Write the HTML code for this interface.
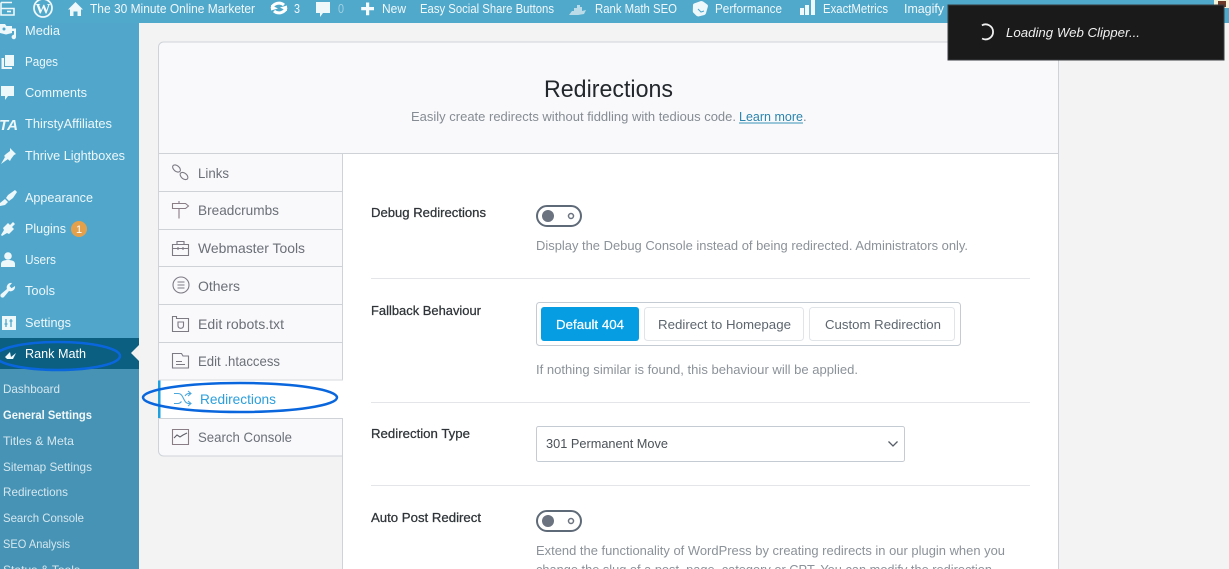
<!DOCTYPE html>
<html lang="en">
<head>
<meta charset="utf-8">
<title>Redirections</title>
<style>
html,body{margin:0;padding:0;width:1229px;height:569px;overflow:hidden;background:#f3f3f4}
svg{display:block;filter:blur(.3px)}
text{font-family:"Liberation Sans",sans-serif}
.bar text{font-size:13px;fill:#f1f8fb}
.side text{font-size:13px;fill:#eef7fa}
.sub text{font-size:12px;fill:#d5e7ef}
.tab text{font-size:14px;fill:#6b7078}
.ti{fill:none;stroke:#7d7a84;stroke-width:1.1}
.lab text{font-size:12.5px;fill:#2f3438;stroke:#2f3438;stroke-width:.25}
.desc text{font-size:12.5px;fill:#8b9299}
.btn{font-size:12.5px;fill:#5d666f}
</style>
</head>
<body>
<svg width="1229" height="569" viewBox="0 0 1229 569" xmlns="http://www.w3.org/2000/svg">
<!-- backgrounds -->
<rect width="1229" height="569" fill="#f3f3f4"/>
<rect x="0" y="23" width="139" height="546" fill="#50a7cb"/>
<rect x="0" y="338" width="139" height="31" fill="#0b5f80"/>
<rect x="0" y="369" width="139" height="200" fill="#4693b5"/>
<path d="M139 345l-8 8 8 8z" fill="#f1f1f1"/>
<rect width="1229" height="23" fill="#50a9cb"/>

<!-- top bar -->
<g class="bar">
<g fill="none" stroke="#eef7fa" stroke-width="1.6"><path d="M1 2.500h11M1 2.500v12.500h13V8.500H1"/><path d="M7 11.500h4"/></g>
<circle cx="43" cy="8" r="9" fill="none" stroke="#eef7fa" stroke-width="1.800"/>
<text x="35.500" y="13.500" textLength="15" lengthAdjust="spacingAndGlyphs" style="font-family:'Liberation Serif',serif;font-weight:bold;font-size:15px;fill:#f4fafc">W</text>
<path d="M68 9.500l7.500-7.500 7.500 7.500h-2v6.500h-3.500v-4.500h-4v4.500h-3.500v-6.500z" fill="#eef7fa"/>
<text x="90" y="13" textLength="165" lengthAdjust="spacingAndGlyphs">The 30 Minute Online Marketer</text>
<path d="M272 8.500a7 6 0 0 1 12-3.500M286 7.500a7 6 0 0 1-12 3.500" fill="none" stroke="#fff" stroke-width="3"/>
<path d="M271 5l7 3.500-7 2zM287 11l-7-3.500 7-2z" fill="#fff"/>
<text x="294" y="13" textLength="6" lengthAdjust="spacingAndGlyphs">3</text>
<path d="M316 2h14v11h-7l-3 4v-4h-4z" fill="#eef7fa"/>
<text x="338" y="13" textLength="6" lengthAdjust="spacingAndGlyphs" style="fill:#9fd0e3">0</text>
<path d="M366 2.500h3.200v4.500h4.800v3.200h-4.800v5h-3.200v-5h-4.800v-3.200h4.800z" fill="#f5fbfd"/>
<text x="382" y="13" textLength="24" lengthAdjust="spacingAndGlyphs">New</text>
<text x="420" y="13" textLength="134" lengthAdjust="spacingAndGlyphs">Easy Social Share Buttons</text>
<path d="M569 15l3-4h2v-3h3v-3h3v2h2v4l4-1-2 4-6 1z" fill="#bcdbe8"/>
<text x="595" y="13" textLength="82" lengthAdjust="spacingAndGlyphs">Rank Math SEO</text>
<path d="M693 5q0-1 1-1.500l7-2.500q1.500 0 2.500.8l4 3q.6.700.4 1.700l-2 7q-.5 1-1.500 1.500l-6 1.500q-1 0-2-.7l-3-3q-.6-.6-.6-1.500z" fill="#eef7fa"/>
<path d="M698 9l3 3 3-1" fill="none" stroke="#50a9cb" stroke-width="1"/>
<text x="715" y="13" textLength="67" lengthAdjust="spacingAndGlyphs">Performance</text>
<path d="M800 8h4v7h-4zM805 5h4v10h-4zM811 0h4v15h-4z" fill="#eef7fa"/>
<text x="823" y="13" textLength="65" lengthAdjust="spacingAndGlyphs">ExactMetrics</text>
<text x="904" y="13" textLength="40" lengthAdjust="spacingAndGlyphs">Imagify</text>
<rect x="1214" y="0" width="15" height="8" fill="#f2f3d8"/>
<rect x="1218" y="1" width="8" height="6" fill="#6e3a2a"/>
</g>

<!-- sidebar -->
<g class="side">
<path d="M0 24h5l1.500 2H12v7l-6 1.500L0 33z" fill="#eef7fa"/><circle cx="4" cy="29" r="1.500" fill="#50a7cb"/>
<path d="M9 28.500h7v8.500a2.200 2.200 0 1 1-2-2.200v-3.800h-3z" fill="#eef7fa"/>
<text x="25" y="35" textLength="35" lengthAdjust="spacingAndGlyphs">Media</text>
<path d="M5 55h9v11H5z" fill="#eef7fa"/><path d="M1.500 58H4v9h8v2H1.500z" fill="#eef7fa"/>
<text x="25" y="66" textLength="33" lengthAdjust="spacingAndGlyphs">Pages</text>
<path d="M1 86h13v10H8l-3 4v-4H1z" fill="#eef7fa"/>
<text x="25" y="97" textLength="62" lengthAdjust="spacingAndGlyphs">Comments</text>
<text x="-1" y="130" style="font-weight:bold;font-style:italic;font-size:15px" textLength="19" lengthAdjust="spacingAndGlyphs">TA</text>
<text x="25" y="128" textLength="87" lengthAdjust="spacingAndGlyphs">ThirstyAffiliates</text>
<path d="M10 148l6 6-2 1-3 4-1 2-6-5 2-2 4-3zM5 157l3 2-7 5z" fill="#eef7fa"/>
<text x="25" y="160" textLength="100" lengthAdjust="spacingAndGlyphs">Thrive Lightboxes</text>
<path d="M15 190l-7 5-2 3 3 3 4-3 4-6zM5 199l3 3-3 3-5 1 0-3z" fill="#eef7fa"/>
<text x="25" y="202" textLength="68" lengthAdjust="spacingAndGlyphs">Appearance</text>
<path d="M13 222l2 2-3 3 2 2-5 5-2-1-5 3-1-1 3-5-1-2 5-5 2 2z" fill="#eef7fa"/>
<text x="25" y="233" textLength="41" lengthAdjust="spacingAndGlyphs">Plugins</text>
<circle cx="79" cy="229" r="8" fill="#e4a04a"/>
<text x="76" y="233" style="font-size:11px;fill:#fff">1</text>
<circle cx="8" cy="256" r="3.800" fill="#eef7fa"/><path d="M1 267v-3c0-3 3-4 7-4s7 1 7 4v3z" fill="#eef7fa"/>
<text x="25" y="264" textLength="31" lengthAdjust="spacingAndGlyphs">Users</text>
<path d="M15 286a4.500 4.500 0 0 1-6 5l-5 6a1.800 1.800 0 0 1-3-3l6-5a4.500 4.500 0 0 1 5-6l-2.500 3 2 2.300z" fill="#eef7fa"/>
<text x="25" y="295" textLength="30" lengthAdjust="spacingAndGlyphs">Tools</text>
<path d="M2 316h14v14H2z" fill="#eef7fa"/><path d="M6 319v8M11 319v8M4.500 324h3M9.500 321h3" stroke="#50a7cb" stroke-width="1.300"/>
<text x="25" y="327" textLength="46" lengthAdjust="spacingAndGlyphs">Settings</text>
<path d="M5 357l5-5 1 5 5-4-3 6H7z" fill="#eef7fa"/>
<text x="25" y="358" textLength="61" lengthAdjust="spacingAndGlyphs" style="fill:#fff">Rank Math</text>
</g>
<g class="sub">
<text x="3" y="393" textLength="57" lengthAdjust="spacingAndGlyphs">Dashboard</text>
<text x="3" y="419" textLength="89" lengthAdjust="spacingAndGlyphs" style="fill:#f2f8fa;font-weight:bold">General Settings</text>
<text x="3" y="445" textLength="71" lengthAdjust="spacingAndGlyphs">Titles &amp; Meta</text>
<text x="3" y="471" textLength="89" lengthAdjust="spacingAndGlyphs">Sitemap Settings</text>
<text x="3" y="496" textLength="65" lengthAdjust="spacingAndGlyphs">Redirections</text>
<text x="3" y="522" textLength="81" lengthAdjust="spacingAndGlyphs">Search Console</text>
<text x="3" y="548" textLength="67" lengthAdjust="spacingAndGlyphs">SEO Analysis</text>
<text x="3" y="574" textLength="77" lengthAdjust="spacingAndGlyphs">Status &amp; Tools</text>
</g>

<!-- card -->
<path d="M158.500 153.500V47a5 5 0 0 1 5-5H1058.500V153.500z" fill="#f9f9fb" stroke="#cfd3d8"/>
<rect x="343" y="154" width="715" height="415" fill="#fff"/>
<path d="M1058.500 153V569" stroke="#cfd3d8" fill="none"/>
<path d="M342.500 153V569" stroke="#cfd3d8" fill="none"/>
<path d="M158.500 154V451a5 5 0 0 0 5 5H342V154z" fill="#f9f9fb"/>
<path d="M158.500 153V451a5 5 0 0 0 5 5H342" fill="none" stroke="#cfd3d8"/>
<path d="M158 191.500h184M158 229.500h184M158 266.500h184M158 304.500h184M158 342.500h184M158 418.500h184" stroke="#cfd3d8"/>
<rect x="158" y="380" width="185" height="38" fill="#fff"/>
<rect x="158" y="380" width="2.500" height="38" fill="#1e9fe0"/>
<path d="M158 380h185" stroke="#d7dade"/>

<!-- header text -->
<text x="544" y="97" textLength="129" lengthAdjust="spacingAndGlyphs" style="font-size:24px;fill:#23282d">Redirections</text>
<text x="411" y="121" textLength="325" lengthAdjust="spacingAndGlyphs" style="font-size:13px;fill:#858c93">Easily create redirects without fiddling with tedious code.</text>
<text x="739" y="121" textLength="64" lengthAdjust="spacingAndGlyphs" style="font-size:13px;fill:#2a84ad">Learn more</text>
<path d="M739 123h64" stroke="#3b93ba" stroke-width="1"/>
<text x="803" y="121" style="font-size:13px;fill:#858c93">.</text>

<!-- tabs -->
<g class="tab">
<g class="ti"><ellipse cx="176.500" cy="168.500" rx="4.500" ry="2.800" transform="rotate(40 176.500 168.500)"/><ellipse cx="184" cy="176" rx="4.500" ry="2.800" transform="rotate(40 184 176)"/></g>
<text x="198" y="178" textLength="31" lengthAdjust="spacingAndGlyphs">Links</text>
<path class="ti" d="M172.500 203.500h13l3 2.500-3 2.500h-13zM179 203.500v-2.500M179 208.500v10" style="stroke:#8a7d86"/>
<text x="198" y="215" textLength="81" lengthAdjust="spacingAndGlyphs">Breadcrumbs</text>
<path class="ti" d="M172.500 244.500h16v11h-16zM172.500 248.500h16M177 244.500v-3h7v3M178 247v3M183 247v3"/>
<text x="198" y="253" textLength="107" lengthAdjust="spacingAndGlyphs">Webmaster Tools</text>
<circle class="ti" cx="181" cy="285" r="8"/><path class="ti" d="M177.500 282h7M177.500 285h7M177.500 288h7"/>
<text x="198" y="291" textLength="42" lengthAdjust="spacingAndGlyphs">Others</text>
<path class="ti" d="M172.500 316.500h4v2h12v13h-16z"/><path class="ti" d="M178 322h5.500v4a2.800 2.800 0 0 1-5.500 0z"/>
<text x="198" y="329" textLength="86" lengthAdjust="spacingAndGlyphs">Edit robots.txt</text>
<path class="ti" d="M172.500 353.500h9l1.500 2.500h5.500v12h-16zM176 361.500h6M176 364.500h9"/>
<text x="198" y="366" textLength="82" lengthAdjust="spacingAndGlyphs">Edit .htaccess</text>
<path d="M174 393.500h4c3 0 4 2 5.500 5s2.500 5 5.500 5h2M174 403.500h4c1.500 0 2.500-.8 3.500-2M185 396c1-1.500 2-2.500 4-2.500h2M188 391l3 2.500-3 2.500M188 401l3 2.500-3 2.500" fill="none" stroke="#4aa7dd" stroke-width="1.100"/>
<text x="200" y="404" textLength="76" lengthAdjust="spacingAndGlyphs" style="fill:#2b9fdc">Redirections</text>
<path class="ti" d="M172.500 429.500h16v15h-16z" style="stroke:#8a7d86"/><path d="M174 438l3-3 3 2 3-2 4-2" fill="none" stroke="#5f5f68" stroke-width="1.100"/>
<text x="198" y="442" textLength="94" lengthAdjust="spacingAndGlyphs">Search Console</text>
</g>

<!-- settings -->
<g class="lab">
<text x="371" y="217" textLength="115" lengthAdjust="spacingAndGlyphs">Debug Redirections</text>
<text x="371" y="315" textLength="110" lengthAdjust="spacingAndGlyphs">Fallback Behaviour</text>
<text x="371" y="438" textLength="99" lengthAdjust="spacingAndGlyphs">Redirection Type</text>
<text x="371" y="522" textLength="110" lengthAdjust="spacingAndGlyphs">Auto Post Redirect</text>
</g>
<g class="desc">
<text x="536" y="250" textLength="432" lengthAdjust="spacingAndGlyphs">Display the Debug Console instead of being redirected. Administrators only.</text>
<text x="536" y="374" textLength="322" lengthAdjust="spacingAndGlyphs">If nothing similar is found, this behaviour will be applied.</text>
<text x="536" y="555" textLength="469" lengthAdjust="spacingAndGlyphs">Extend the functionality of WordPress by creating redirects in our plugin when you</text>
<text x="536" y="574" textLength="456" lengthAdjust="spacingAndGlyphs">change the slug of a post, page, category or CPT. You can modify the redirection</text>
</g>
<path d="M371 278.500h659M371 402.500h659M371 485.500h659" stroke="#e3e5e8"/>

<!-- toggles -->
<rect x="537" y="206" width="44" height="20" rx="10" fill="#fff" stroke="#5f6a78" stroke-width="2"/>
<circle cx="548" cy="216" r="6" fill="#6b7280"/><circle cx="571" cy="216" r="2.500" fill="#fff" stroke="#6b7280" stroke-width="1.500"/>
<rect x="537" y="511" width="44" height="20" rx="10" fill="#fff" stroke="#5f6a78" stroke-width="2"/>
<circle cx="548" cy="521" r="6" fill="#6b7280"/><circle cx="571" cy="521" r="2.500" fill="#fff" stroke="#6b7280" stroke-width="1.500"/>

<!-- button group -->
<rect x="536.500" y="302.500" width="424" height="43" rx="3" fill="#fff" stroke="#c5cbd2"/>
<rect x="541" y="307" width="98" height="34" rx="3" fill="#069de3"/>
<text x="556" y="329" textLength="68" lengthAdjust="spacingAndGlyphs" style="font-size:12.500px;fill:#fff;stroke:#fff;stroke-width:.2">Default 404</text>
<rect x="644.500" y="307.500" width="159" height="33" rx="3" fill="#fff" stroke="#e2e5e8"/>
<text class="btn" x="658" y="329" textLength="133" lengthAdjust="spacingAndGlyphs">Redirect to Homepage</text>
<rect x="809.500" y="307.500" width="145" height="33" rx="3" fill="#fff" stroke="#e2e5e8"/>
<text class="btn" x="825" y="329" textLength="116" lengthAdjust="spacingAndGlyphs">Custom Redirection</text>

<!-- select -->
<rect x="536.500" y="426.500" width="368" height="35" rx="2" fill="#fff" stroke="#c5cbd2"/>
<text x="546" y="448" textLength="122" lengthAdjust="spacingAndGlyphs" style="font-size:12.500px;fill:#4b5258">301 Permanent Move</text>
<path d="M888.500 441.500l4.500 4.500 4.500-4.500" fill="none" stroke="#555d66" stroke-width="1.300"/>

<!-- annotation ellipses -->
<ellipse cx="58" cy="356" rx="62" ry="14" fill="none" stroke="#0a66dc" stroke-width="2.500"/>
<ellipse cx="240" cy="397.500" rx="97" ry="14.500" fill="none" stroke="#0a66dc" stroke-width="2.500"/>

<!-- popup -->
<rect x="948" y="5" width="276" height="55" fill="#1a1a1a" stroke="#3a3d40"/>
<path d="M981 26a7.500 7.500 0 1 1 2 13" fill="none" stroke="#f0f0f0" stroke-width="1.800" transform="rotate(8 986 32)"/>
<text x="1006" y="37" textLength="134" lengthAdjust="spacingAndGlyphs" style="font-size:13px;font-style:italic;fill:#f0f0f0">Loading Web Clipper...</text>
</svg>
</body>
</html>
